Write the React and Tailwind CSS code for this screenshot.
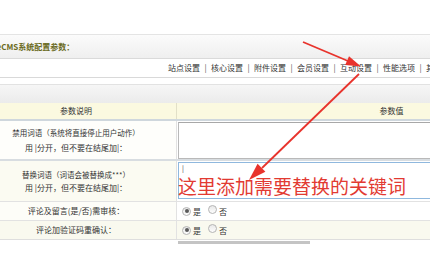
import React from "react"

const navItems = ["站点设置", "核心设置", "附件设置", "会员设置", "互动设置", "性能选项", "其它选项"]

const Radio = ({ checked }) => (
  <span className="inline-flex items-center justify-center w-[9px] h-[9px] rounded-full border border-[#b4b4b4] bg-gradient-to-b from-[#e8e8e8] to-[#fdfdfd]">
    {checked && <span className="block w-[4px] h-[4px] rounded-full bg-[#5a5a5a]" />}
  </span>
)

const YesNo = () => (
  <div className="flex items-center h-full pl-[5px] text-[8px] text-[#333]">
    <Radio checked />
    <span className="ml-[2px] mt-[2px]">是</span>
    <span className="ml-[7px]">
      <Radio />
    </span>
    <span className="ml-[2px] mt-[2px]">否</span>
  </div>
)

export default function App() {
  return (
    <div
      className="relative w-[430px] h-[280px] overflow-hidden bg-white text-[#333]"
      style={{ fontFamily: '"Noto Sans CJK SC", "Liberation Sans", sans-serif' }}
    >
      {/* top blank */}
      <div className="h-[35px] border-b border-[#e4e4e4]" />

      {/* title bar */}
      <div className="h-[24px] flex items-center bg-gradient-to-b from-[#fbfbfb] to-[#efefef] border-b border-[#dadada]">
        <span className="ml-[-19px] text-[8px] font-bold text-[#6a6a22] whitespace-nowrap">DedeCMS系统配置参数：</span>
      </div>

      {/* nav */}
      <div className="h-[19px] flex items-center border-b border-[#d9d9d9] whitespace-nowrap text-[8px] text-[#333]">
        <div className="ml-[168px] flex items-center">
          {navItems.map((t, i) => (
            <React.Fragment key={t}>
              {i > 0 && <span className="w-[11px] text-center text-[#555]">|</span>}
              <span className="w-[32px]">{t}</span>
            </React.Fragment>
          ))}
        </div>
      </div>

      <div className="h-[6px]" />
      <div className="h-[19px] bg-gradient-to-b from-[#f6f6f6] to-[#ebebeb] border-t border-[#e2e2e2]" />

      {/* table */}
      <div className="ml-[-24px] w-[630px] text-[8px]">
        <div className="grid grid-cols-[201px_429px] h-[18px] bg-[#fbf9e0] border-b-2 border-[#cfd7dd]">
          <div className="flex items-center justify-center border-r border-[#e2e0c8]">参数说明</div>
          <div className="flex items-center justify-center">参数值</div>
        </div>

        <div className="grid grid-cols-[201px_429px] h-[40px] border-b-2 border-[#d8dde1]">
          <div className="flex flex-col items-center justify-center leading-[15px] border-r border-[#e2e2e2] bg-[#fefefb]">
            <span className="text-[7.5px]">禁用词语（系统将直接停止用户动作）</span>
            <span>用 |分开，但不要在结尾加|：</span>
          </div>
          <div className="pl-[1px] pt-[1px]">
            <div className="h-[37px] w-[420px] border border-[#b9b9b9] border-t-[#a8a8a8] bg-white" />
          </div>
        </div>

        <div className="grid grid-cols-[201px_429px] h-[41px] border-b border-[#e2e2e2]">
          <div className="flex flex-col items-center justify-center leading-[13px] border-r border-[#e2e2e2] bg-[#fbfbf2]">
            <span className="text-[7.5px]">替换词语（词语会被替换成***）</span>
            <span>用 |分开，但不要在结尾加|：</span>
          </div>
          <div className="pl-[1px] pt-[1px]">
            <div className="h-[37px] w-[420px] border border-[#8fb8de] bg-white pl-[3px] pt-[1px] text-[7px] leading-[8px] text-[#333]">|</div>
          </div>
        </div>

        <div className="grid grid-cols-[201px_429px] h-[19px] border-b border-[#e2e2e2]">
          <div className="flex items-center justify-center border-r border-[#e2e2e2] bg-[#fdfdf8]">评论及留言(是/否)需审核：</div>
          <YesNo />
        </div>

        <div className="grid grid-cols-[201px_429px] h-[19px] border-b border-[#dedede] bg-[#f9f9ef]">
          <div className="flex items-center justify-center border-r border-[#e2e2e2]">评论加验证码重确认：</div>
          <YesNo />
        </div>

        <div className="ml-[202px] mt-[1px] h-[3px] w-[132px] bg-[#c4c4c4]" />
      </div>

      {/* annotation */}
      <div className="absolute left-[178px] top-[174px] text-[19px] leading-[24px] text-[#e23a32] whitespace-nowrap">
        这里添加需要替换的关键词
      </div>

      <svg className="absolute left-0 top-0" width="430" height="280" viewBox="0 0 430 280">
        <line x1="303" y1="42" x2="348" y2="61" stroke="#e8332c" strokeWidth="1.8" />
        <polygon points="361,66.5 345.2,65 349,56.2" fill="#e8332c" />
        <line x1="359" y1="74" x2="262" y2="168" stroke="#e8332c" strokeWidth="1.8" />
        <polygon points="249,180 257.6,163.8 265.4,171.8" fill="#e8332c" />
      </svg>
    </div>
  )
}
